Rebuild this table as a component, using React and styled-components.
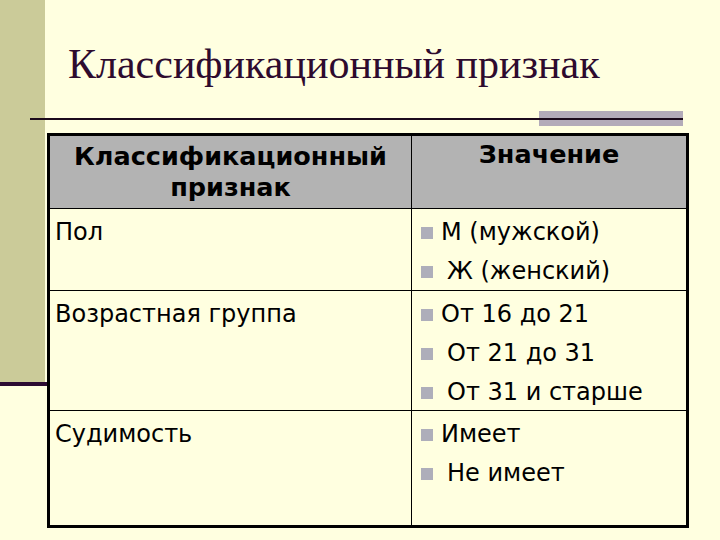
import React from 'react';
import styled, { createGlobalStyle } from 'styled-components';

const GlobalStyle = createGlobalStyle`
  html, body {
    margin: 0;
    padding: 0;
    background: #ffffe0;
  }
`;

const Page = styled.div`
  display: flex;
  width: 720px;
  height: 540px;
  overflow: hidden;
  background: #ffffe0;
`;

const SideBand = styled.div`
  display: flex;
  flex-direction: column;
  width: 45px;
  flex-shrink: 0;
`;

const SideFill = styled.div`
  height: 382px;
  background: #cbcb99;
`;

const SideStripe = styled.div`
  width: 47px;
  height: 4px;
  background: #2c0b32;
`;

const Main = styled.div`
  flex: 1;
  display: flex;
  flex-direction: column;
`;

const Title = styled.h1`
  margin: 40px 0 0 23px;
  font-family: "Liberation Serif", "Times New Roman", serif;
  font-weight: normal;
  font-size: 42px;
  line-height: 48px;
  color: #2e0b2e;
  white-space: nowrap;
`;

const RuleRow = styled.div`
  display: grid;
  margin: 23px 0 0 -15px;
  width: 653px;
  height: 15px;
`;

const RuleAccent = styled.div`
  grid-area: 1 / 1;
  justify-self: end;
  width: 144px;
  height: 15px;
  background: #b3abb9;
`;

const RuleLine = styled.div`
  grid-area: 1 / 1;
  align-self: center;
  height: 2px;
  background: #1c0a1c;
`;

const Table = styled.div`
  display: grid;
  grid-template-columns: 361px 274px;
  grid-template-rows: 72px 81px 119px 114px;
  gap: 1px;
  margin: 7px 0 0 2px;
  width: 636px;
  border: 3px solid #000;
  background: #000;
`;

const HeadCell = styled.div`
  background: #b3b3b3;
  padding-top: ${(p) => p.$top}px;
  text-align: center;
  font-family: "DejaVu Sans", Verdana, sans-serif;
  font-weight: bold;
  font-size: 25.5px;
  line-height: 31px;
  color: #000;
  white-space: nowrap;
`;

const Cell = styled.div`
  background: #ffffe0;
  padding: 4px 0 0 5px;
  font-family: "DejaVu Sans", Tahoma, sans-serif;
  font-size: 24px;
  line-height: 39px;
  color: #000;
  white-space: nowrap;
`;

const ValueCell = styled.div`
  background: #ffffe0;
  padding: 4px 0 0 9px;
  display: flex;
  flex-direction: column;
`;

const Item = styled.div`
  display: flex;
  align-items: flex-start;
  gap: ${(p) => (p.$first ? 8 : 14)}px;
  font-family: "DejaVu Sans", Tahoma, sans-serif;
  font-size: 24px;
  line-height: 39px;
  color: #000;
  white-space: nowrap;
`;

const Bullet = styled.span`
  width: 12px;
  height: 12px;
  margin-top: 14px;
  flex-shrink: 0;
  background: #aeaeba;
`;

const rows = [
  { name: 'Пол', values: ['М (мужской)', 'Ж (женский)'] },
  { name: 'Возрастная группа', values: ['От 16 до 21', 'От 21 до 31', 'От 31 и старше'] },
  { name: 'Судимость', values: ['Имеет', 'Не имеет'] },
];

export default function App() {
  return (
    <>
      <GlobalStyle />
      <Page>
        <SideBand>
          <SideFill />
          <SideStripe />
        </SideBand>
        <Main>
          <Title>Классификационный признак</Title>
          <RuleRow>
            <RuleAccent />
            <RuleLine />
          </RuleRow>
          <Table>
            <HeadCell $top={5}>
              Классификационный
              <br />
              признак
            </HeadCell>
            <HeadCell $top={3}>Значение</HeadCell>
            {rows.map((row) => (
              <React.Fragment key={row.name}>
                <Cell>{row.name}</Cell>
                <ValueCell>
                  {row.values.map((v, i) => (
                    <Item key={v} $first={i === 0}>
                      <Bullet />
                      {v}
                    </Item>
                  ))}
                </ValueCell>
              </React.Fragment>
            ))}
          </Table>
        </Main>
      </Page>
    </>
  );
}
